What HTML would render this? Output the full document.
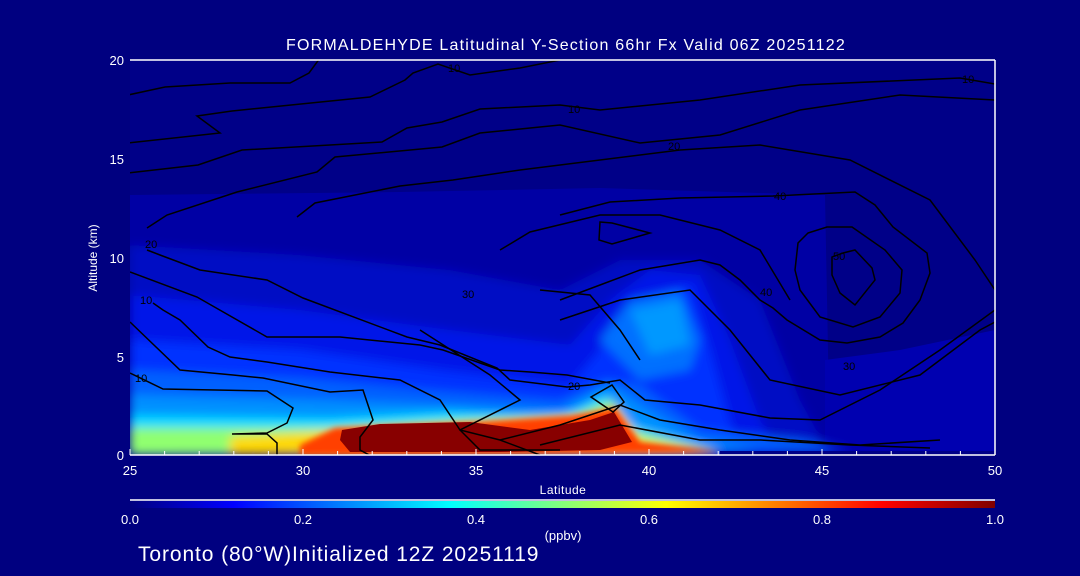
<!DOCTYPE html>
<html><head><style>
html,body{margin:0;padding:0;background:#000080;}
body{width:1080px;height:576px;overflow:hidden;}
svg{display:block}
text{font-family:"Liberation Sans",sans-serif;fill:#fff}
</style></head><body>
<svg width="1080" height="576" viewBox="0 0 1080 576">
<defs>
<filter id="b" x="-10%" y="-10%" width="120%" height="120%"><feGaussianBlur stdDeviation="5"/></filter>
<filter id="b2"><feGaussianBlur stdDeviation="3"/></filter>
<clipPath id="c"><rect x="130" y="60" width="865" height="395"/></clipPath>
<linearGradient id="cb" x1="0" x2="1">
<stop offset="0" stop-color="#00007f"/><stop offset="0.12" stop-color="#0000ff"/>
<stop offset="0.37" stop-color="#00ffff"/><stop offset="0.62" stop-color="#ffff00"/>
<stop offset="0.87" stop-color="#ff0000"/><stop offset="1" stop-color="#7f0000"/>
</linearGradient>
</defs>
<rect width="1080" height="576" fill="#000080"/>
<g clip-path="url(#c)">
<rect x="130" y="60" width="865" height="395" fill="#000088"/>
<polygon points="130,195 400,192 600,188 825,195 830,455 130,455" fill="#0000a4"/>
<polygon points="825,360 900,350 995,330 995,455 825,455" fill="#0000b0"/>
<g filter="url(#b)">
<polygon points="130,245 300,255 450,270 560,290 620,260 700,260 760,300 800,400 830,455 130,455" fill="#0008c4"/>
<polygon points="130,295 300,310 450,330 570,345 610,300 650,270 700,275 730,340 760,420 780,455 130,455" fill="#0018e8"/>
<polygon points="130,340 300,350 440,370 570,385 600,350 630,300 690,285 710,350 735,440 130,455" fill="#0030ff"/>
<polygon points="600,340 630,300 680,290 700,340 690,370 640,380" fill="#0070ff"/>
<polygon points="630,310 680,300 690,345 650,355" fill="#0098ff"/>
<polygon points="130,370 300,378 430,390 560,400 605,380 640,385 700,430 800,440 850,450 130,455" fill="#0060ff"/>
<polygon points="130,395 320,400 450,405 560,410 610,385 640,405 700,440 760,450 130,455" fill="#0090ff"/>
<polygon points="130,415 330,418 450,412 560,418 605,395 630,425 700,448 130,455" fill="#00d8ff"/>
<polygon points="130,428 330,428 460,420 575,415 612,400 630,430 720,452 130,455" fill="#90ff70"/>
<polygon points="230,437 320,432 470,424 590,416 616,408 640,440 720,452 230,455" fill="#ffd800"/>
</g>
<g filter="url(#b2)">
<polygon points="300,445 335,428 480,422 570,416 615,408 640,442 720,452 300,455" fill="#ff4000"/>
</g>
<polygon points="342,430 380,424 470,422 530,430 590,420 614,412 632,442 600,450 500,452 350,452 340,440" fill="#880000"/>
<polygon points="720,451 995,451 995,455 720,455" fill="#000088"/>
</g>
<g fill="none" stroke="#000" stroke-width="1.5" clip-path="url(#c)">
<polyline points="128,95 165,87 230,83 290,83 309,73 320,58"/>
<polyline points="128,143 220,133 197,116 232,111 370,97 405,80 413,73 438,64 470,75 520,68 560,60"/>
<polyline points="128,173 198,165 242,150 382,142 407,128 442,122 480,109 560,105 600,110 700,100 800,85 960,78 995,84"/>
<polyline points="147,228 167,215 237,192 317,172 335,157 442,147 480,133 560,125 640,143 720,135 800,110 900,95 995,100"/>
<polyline points="147,250 160,255 200,270 267,280 303,298 407,337 440,345 497,368 510,380 567,387 590,385 620,380 645,400 700,405 770,418 820,420 880,390 940,350 995,310"/>
<polyline points="130,272 197,297 267,337 340,337 420,345 443,350 500,370 530,372 567,375 610,383"/>
<polyline points="297,217 315,203 400,186 453,180 520,170 600,160 680,150 760,145 850,160 930,200 975,260 995,290"/>
<polyline points="130,322 180,370 233,375 263,378 330,392 363,390 373,420 360,437 360,450 373,457"/>
<polyline points="153,303 163,310 180,320 208,347 230,357 267,362 330,372 400,380 440,400 460,430 500,440 540,455"/>
<polyline points="130,373 163,389 267,391 293,408 287,423 267,433 232,434 267,434 277,443 277,455"/>
<polyline points="420,330 490,375 520,400 460,430 480,450 560,450"/>
<polyline points="500,440 560,425 620,405 660,420 720,430 790,440 860,445 940,440"/>
<polyline points="540,445 620,425 700,440 760,440 850,445 930,448"/>
<polygon points="591,397 612,385 624,402 613,412"/>
<polygon points="600,222 612,223 650,233 612,244 599,240"/>
<polygon points="855,250 872,268 875,280 855,305 840,293 832,275 832,257 843,253"/>
<polygon points="808,233 827,227 852,227 885,250 902,270 900,293 880,317 853,327 820,317 800,290 795,270 798,243"/>
<polyline points="560,215 610,202 680,198 773,196 855,192 875,205 893,227 927,253 930,273 920,300 903,323 880,337 847,343 820,340 787,320 773,308 760,300 740,280 720,265 700,260 640,270 600,285 560,300"/>
<polyline points="500,250 530,232 600,215 660,215 720,230 760,250 790,300"/>
<polyline points="560,320 620,300 690,290 730,330 770,380 840,395 920,375 980,330 995,322"/>
<polyline points="640,360 620,330 590,295 540,290"/>
</g>
<g font-size="11">
<text x="448" y="72" style="fill:#000">10</text>
<text x="568" y="113" style="fill:#000">10</text>
<text x="668" y="150" style="fill:#000">20</text>
<text x="774" y="200" style="fill:#000">40</text>
<text x="962" y="83" style="fill:#000">10</text>
<text x="145" y="248" style="fill:#000">20</text>
<text x="140" y="304" style="fill:#000">10</text>
<text x="135" y="382" style="fill:#000">10</text>
<text x="462" y="298" style="fill:#000">30</text>
<text x="568" y="390" style="fill:#000">20</text>
<text x="760" y="296" style="fill:#000">40</text>
<text x="843" y="370" style="fill:#000">30</text>
<text x="833" y="260" style="fill:#000">50</text>
</g>
<g stroke="#fff" stroke-width="1.5" fill="none">
<line x1="130" y1="60" x2="995" y2="60"/>
<line x1="995" y1="60" x2="995" y2="455"/>
<line x1="130" y1="455" x2="995" y2="455"/>
</g>
<g stroke="#fff" stroke-width="1">
<path d="M130,455v-6M164.6,455v-4M199.2,455v-4M233.8,455v-4M268.4,455v-4M303,455v-6M337.6,455v-4M372.2,455v-4M406.8,455v-4M441.4,455v-4M476,455v-6M510.6,455v-4M545.2,455v-4M579.8,455v-4M614.4,455v-4M649,455v-6M683.6,455v-4M718.2,455v-4M752.8,455v-4M787.4,455v-4M822,455v-6M856.6,455v-4M891.2,455v-4M925.8,455v-4M960.4,455v-4M995,455v-6"/>
</g>
<g font-size="13">
<text x="124" y="65" text-anchor="end">20</text>
<text x="124" y="164" text-anchor="end">15</text>
<text x="124" y="263" text-anchor="end">10</text>
<text x="124" y="362" text-anchor="end">5</text>
<text x="124" y="460" text-anchor="end">0</text>
<text x="130" y="475" text-anchor="middle">25</text>
<text x="303" y="475" text-anchor="middle">30</text>
<text x="476" y="475" text-anchor="middle">35</text>
<text x="649" y="475" text-anchor="middle">40</text>
<text x="822" y="475" text-anchor="middle">45</text>
<text x="995" y="475" text-anchor="middle">50</text>
<text x="563" y="494" text-anchor="middle" font-size="12" letter-spacing="0.5">Latitude</text>
<text transform="translate(97,258) rotate(-90)" text-anchor="middle" font-size="12">Altitude (km)</text>
<text x="566" y="50" text-anchor="middle" font-size="16" letter-spacing="1.2">FORMALDEHYDE Latitudinal Y-Section 66hr  Fx Valid 06Z 20251122</text>
</g>
<line x1="130" y1="500" x2="995" y2="500" stroke="#fff" stroke-width="1.5"/>
<rect x="130" y="501" width="865" height="7" fill="url(#cb)"/>
<g font-size="13">
<text x="130" y="524" text-anchor="middle">0.0</text>
<text x="303" y="524" text-anchor="middle">0.2</text>
<text x="476" y="524" text-anchor="middle">0.4</text>
<text x="649" y="524" text-anchor="middle">0.6</text>
<text x="822" y="524" text-anchor="middle">0.8</text>
<text x="995" y="524" text-anchor="middle">1.0</text>
<text x="563" y="540" text-anchor="middle" font-size="13">(ppbv)</text>
<text x="138" y="561" font-size="21" letter-spacing="0.9">Toronto (80°W)Initialized 12Z 20251119</text>
</g>
</svg>
</body></html>
